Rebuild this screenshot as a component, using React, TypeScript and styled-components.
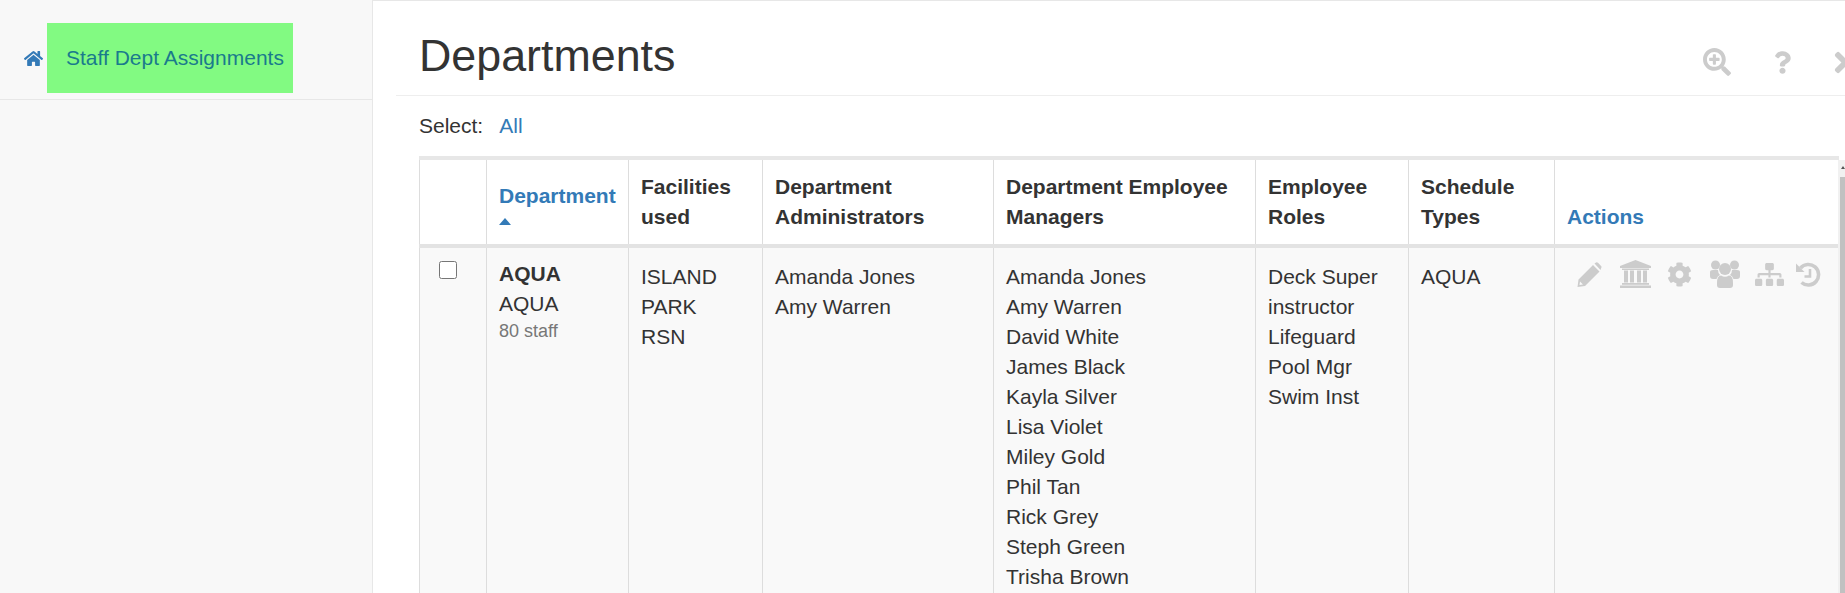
import React from "react";
import styled, { createGlobalStyle } from "styled-components";
import { FaHome, FaSearchPlus, FaQuestion, FaTimes, FaCog, FaSitemap } from "react-icons/fa";

const Global = createGlobalStyle`
  html, body { margin: 0; padding: 0; height: 100%; overflow: hidden; background: #fff; }
  body { font-family: "Liberation Sans", Arial, sans-serif; font-size: 21px; color: #333; }
`;
const Page = styled.div`display: flex; width: 1845px; height: 593px; overflow: hidden; position: relative;`;
const Sidebar = styled.aside`width: 373px; box-sizing: border-box; flex: none; background: #f8f8f8; border-right: 1px solid #e7e7e7;`;
const SideHeader = styled.div`height: 100px; border-bottom: 1px solid #e7e7e7; display: flex; align-items: flex-start; padding: 23px 0 0 24px; box-sizing: border-box;`;
const HomeLink = styled.a`color: #337ab7; font-size: 19px; width: 23px; height: 70px; display: flex; align-items: center;`;
const Crumb = styled.a`background: #82fa82; color: #1a7a8c; height: 70px; width: 246px; box-sizing: border-box; padding-left: 19px; font-size: 21px; display: flex; align-items: center;`;
const Main = styled.main`flex: 1; min-width: 0; border-top: 1px solid #e7e7e7; padding-left: 23px; overflow: hidden;`;
const TitleBar = styled.div`height: 95px; border-bottom: 1px solid #eee; padding-left: 23px; box-sizing: border-box; display: flex; align-items: flex-start; justify-content: space-between;`;
const Title = styled.h1`margin: 29px 0 0; font-size: 44.8px; line-height: 50px; font-weight: 400; color: #333;`;
const Tools = styled.div`display: flex; align-items: center; color: #ccc; margin: 47px 0 0 0; width: 142px; flex: none; gap: 43px; height: 28px; svg { flex: none; }`;
const QuestionIcon = styled(FaQuestion)`width: 17px; height: 23px;`;
const TimesIcon = styled(FaTimes)`width: 23px; height: 31px;`;
const SelectRow = styled.div`padding-left: 23px; height: 60px; display: flex; align-items: center; gap: 16px; box-sizing: border-box; padding-bottom: 0;`;
const Link = styled.a`color: #337ab7;`;
const Table = styled.table`border-collapse: collapse; margin-left: 23px; width: 1419px; table-layout: fixed; border-top: 4px solid #e7e7e7; border-right: 1px solid #ddd;`;
const Th = styled.th<{ $w: number }>`width: ${p => p.$w}px; box-sizing: border-box; text-align: left; vertical-align: bottom; padding: 12px; line-height: 30px; font-weight: 700; border-left: 1px solid #ddd; border-bottom: 4px solid #e3e3e3;`;
const Td = styled.td`vertical-align: top; background: #f9f9f9; padding: 14px 12px 0; line-height: 30px; border-left: 1px solid #ddd; height: 400px;`;
const Blue = styled.span`color: #337ab7;`;
const CaretBox = styled.span`display: block; height: 21px; padding-top: 7px; box-sizing: border-box;`;
const Caret = styled.span`display: block; width: 0; height: 0; border-left: 6.5px solid transparent; border-right: 6.5px solid transparent; border-bottom: 7px solid #337ab7;`;
const CheckCell = styled(Td)`padding-top: 13px; padding-left: 19px;`;
const Check = styled.input`margin: 0; width: 18px; height: 18px; display: block;`;
const Name = styled.div`font-weight: 700; margin-top: -3px;`;
const Muted = styled.div`font-size: 18px; color: #777; line-height: 24px;`;
const Line = styled.div``;
const ActionCell = styled(Td)`padding: 11px 0 0 22px;`;
const ActionIcons = styled.div`display: flex; align-items: center; color: #ccc; height: 30px; svg { flex: none; }`;
const ActionSlot = styled.span<{ $gap: number }>`display: flex; margin-right: ${p => p.$gap}px;`;
const Track = styled.div`position: absolute; right: 0; top: 160px; bottom: 0; width: 7px; background: #f1f1f1;`;
const Thumb = styled.div`position: absolute; left: 2px; right: 0; top: 17px; bottom: 0; background: #c1c1c1;`;
const Arrow = styled.div`position: absolute; left: 3px; top: 6px; width: 0; height: 0; border-left: 2px solid transparent; border-right: 2px solid transparent; border-bottom: 3px solid #555;`;

const Pencil = () => (
  <svg width="25" height="25" viewBox="0 0 25 25" fill="currentColor">
    <path d="M0.5 25 L1.5 17.5 L16 3 L22.5 9.5 L8 24 Z M3 19.5 L2.5 23 L6 22.5 L3.5 20 Z" fillRule="evenodd" />
    <path d="M17.5 1.5 L19 0.5 Q20 0 21 0.8 L24.3 4.2 Q25 5 24.2 6 L23.5 8 Z" />
  </svg>
);
const Bank = () => (
  <svg width="31" height="28" viewBox="0 0 31 28" fill="currentColor">
    <path d="M15.5 0 L31 6 V8 H0 V6 Z" />
    <rect x="2" y="8.5" width="27" height="1.5" />
    <rect x="4" y="10.5" width="4" height="12" />
    <rect x="10" y="10.5" width="4" height="12" />
    <rect x="17" y="10.5" width="4" height="12" />
    <rect x="23" y="10.5" width="4" height="12" />
    <rect x="2" y="23" width="27" height="1.8" />
    <rect x="0" y="25.5" width="31" height="2.5" />
  </svg>
);
const Users = () => (
  <svg width="30" height="28" viewBox="0 0 30 28" fill="currentColor">
    <circle cx="15" cy="9" r="6" />
    <circle cx="5.5" cy="5" r="4.5" />
    <circle cx="24.5" cy="5" r="4.5" />
    <path d="M0 12 Q0 10 3 10 H8 Q8 13 10 15 Q7.5 16 6.5 19 H3 Q0 19 0 16 Z" />
    <path d="M30 12 Q30 10 27 10 H22 Q22 13 20 15 Q22.5 16 23.5 19 H27 Q30 19 30 16 Z" />
    <path d="M7 23 Q7 15.5 11 15.5 Q15 18 19 15.5 Q23 15.5 23 23 V25 Q23 28 20 28 H10 Q7 28 7 25 Z" />
  </svg>
);
const HistoryIcon = () => (
  <svg width="25" height="25" viewBox="0 0 25 25" fill="none" stroke="currentColor">
    <path d="M4.5 6 A10.3 10.3 0 1 1 5.5 20.5" strokeWidth="3.6" />
    <path d="M0 1.5 L0 10 L8.5 10 Z" fill="currentColor" stroke="none" />
    <path d="M14 7 V14.5 H8.5" strokeWidth="2.6" />
  </svg>
);

const managers = ["Amanda Jones","Amy Warren","David White","James Black","Kayla Silver","Lisa Violet","Miley Gold","Phil Tan","Rick Grey","Steph Green","Trisha Brown"];
const list = (a: string[]) => a.map(x => <Line key={x}>{x}</Line>);

export default function App() {
  return (
    <Page>
      <Global />
      <Sidebar>
        <SideHeader>
          <HomeLink><FaHome /></HomeLink>
          <Crumb>Staff Dept Assignments</Crumb>
        </SideHeader>
      </Sidebar>
      <Main>
        <TitleBar>
          <Title>Departments</Title>
          <Tools><FaSearchPlus size={28} /><QuestionIcon /><TimesIcon /></Tools>
        </TitleBar>
        <SelectRow>Select: <Link>All</Link></SelectRow>
        <Table>
          <thead><tr>
            <Th $w={67} />
            <Th $w={142}><Blue>Department</Blue><CaretBox><Caret /></CaretBox></Th>
            <Th $w={134}>Facilities used</Th>
            <Th $w={231}>Department Administrators</Th>
            <Th $w={262}>Department Employee Managers</Th>
            <Th $w={153}>Employee Roles</Th>
            <Th $w={146}>Schedule Types</Th>
            <Th $w={284}><Blue>Actions</Blue></Th>
          </tr></thead>
          <tbody><tr>
            <CheckCell><Check type="checkbox" /></CheckCell>
            <Td><Name>AQUA</Name><Line>AQUA</Line><Muted>80 staff</Muted></Td>
            <Td>{list(["ISLAND","PARK","RSN"])}</Td>
            <Td>{list(["Amanda Jones","Amy Warren"])}</Td>
            <Td>{list(managers)}</Td>
            <Td>{list(["Deck Super","instructor","Lifeguard","Pool Mgr","Swim Inst"])}</Td>
            <Td>AQUA</Td>
            <ActionCell>
              <ActionIcons>
                <ActionSlot $gap={18}><Pencil /></ActionSlot>
                <ActionSlot $gap={16}><Bank /></ActionSlot>
                <ActionSlot $gap={18}><FaCog size={25} /></ActionSlot>
                <ActionSlot $gap={15}><Users /></ActionSlot>
                <ActionSlot $gap={12}><FaSitemap size={29} /></ActionSlot>
                <ActionSlot $gap={0}><HistoryIcon /></ActionSlot>
              </ActionIcons>
            </ActionCell>
          </tr></tbody>
        </Table>
      </Main>
      <Track><Arrow /><Thumb /></Track>
    </Page>
  );
}
